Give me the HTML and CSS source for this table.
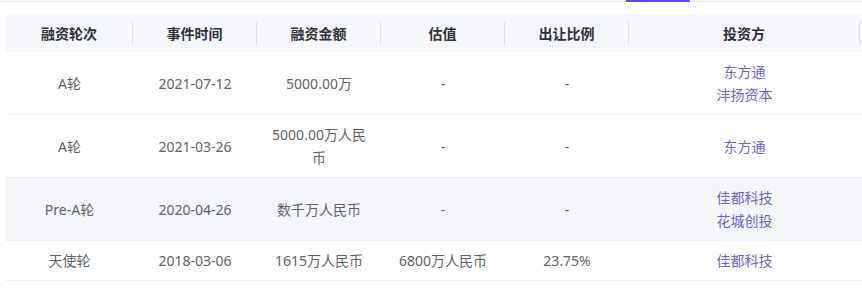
FILE: index.html
```html
<!DOCTYPE html>
<html lang="zh-CN">
<head>
<meta charset="utf-8">
<title>融资历程</title>
<link rel="stylesheet" href="styles.css">
</head>
<body>
<div class="tabbar"><span class="tab-indicator"></span></div>
<table class="grid">
  <colgroup>
    <col class="c1"><col class="c2"><col class="c3"><col class="c4"><col class="c5"><col class="c6"><col class="c7">
  </colgroup>
  <thead>
    <tr>
      <th><div class="cell">融资轮次</div></th>
      <th><div class="cell">事件时间</div></th>
      <th><div class="cell">融资金额</div></th>
      <th><div class="cell">估值</div></th>
      <th><div class="cell">出让比例</div></th>
      <th><div class="cell">投资方</div></th>
      <th><div class="cell blank"></div></th>
    </tr>
  </thead>
  <tbody>
    <tr>
      <td><div class="cell">A轮</div></td>
      <td><div class="cell">2021-07-12</div></td>
      <td><div class="cell">5000.00万</div></td>
      <td><div class="cell">-</div></td>
      <td><div class="cell">-</div></td>
      <td><div class="cell"><a class="inv">东方通</a><a class="inv">沣扬资本</a></div></td>
      <td></td>
    </tr>
    <tr>
      <td><div class="cell">A轮</div></td>
      <td><div class="cell">2021-03-26</div></td>
      <td><div class="cell">5000.00万人民币</div></td>
      <td><div class="cell">-</div></td>
      <td><div class="cell">-</div></td>
      <td><div class="cell"><a class="inv">东方通</a></div></td>
      <td></td>
    </tr>
    <tr class="hover">
      <td><div class="cell">Pre-A轮</div></td>
      <td><div class="cell">2020-04-26</div></td>
      <td><div class="cell">数千万人民币</div></td>
      <td><div class="cell">-</div></td>
      <td><div class="cell">-</div></td>
      <td><div class="cell"><a class="inv">佳都科技</a><a class="inv">花城创投</a></div></td>
      <td></td>
    </tr>
    <tr>
      <td><div class="cell">天使轮</div></td>
      <td><div class="cell">2018-03-06</div></td>
      <td><div class="cell">1615万人民币</div></td>
      <td><div class="cell">6800万人民币</div></td>
      <td><div class="cell">23.75%</div></td>
      <td><div class="cell"><a class="inv">佳都科技</a></div></td>
      <td></td>
    </tr>
  </tbody>
</table>
</body>
</html>
```
FILE: styles.css
```css
html, body {
  margin: 0;
  padding: 0;
  background: #fff;
  overflow: hidden;
}
body {
  font-family: "Noto Sans", "Noto Sans CJK SC", sans-serif;
  font-size: 14px;
  color: #606266;
}
.tabbar {
  display: flex;
  padding-left: 626px;
  height: 2px;
  background: linear-gradient(#fff 0 1px, #ececec 1px 2px);
}
.tab-indicator {
  width: 64px;
  height: 2px;
  background: #5a4fe6;
}
.grid {
  margin: 13px 0 0 6px;
  width: 880px;
  border-collapse: collapse;
  table-layout: fixed;
}
.c1 { width: 127px; }
.c2, .c3, .c4, .c5 { width: 124px; }
.c6 { width: 231px; }
.c7 { width: 26px; }
.grid th {
  background: #f5f7fa;
  padding: 7px 0;
  font-weight: bold;
  color: #303133;
  text-align: center;
}
.grid th .cell {
  border-right: 1px solid #dcdfe6;
}
.grid th .cell.blank {
  border-right: none;
}
.grid td {
  padding: 8px 0;
  border-bottom: 1px solid #ebeef5;
  text-align: center;
  vertical-align: middle;
}
.cell {
  padding: 0 10px;
  line-height: 23px;
  word-break: break-all;
}
.grid tr.hover td {
  background: #f5f6fa;
}
.inv {
  display: block;
  color: #6b62d8;
  text-decoration: none;
}
```
